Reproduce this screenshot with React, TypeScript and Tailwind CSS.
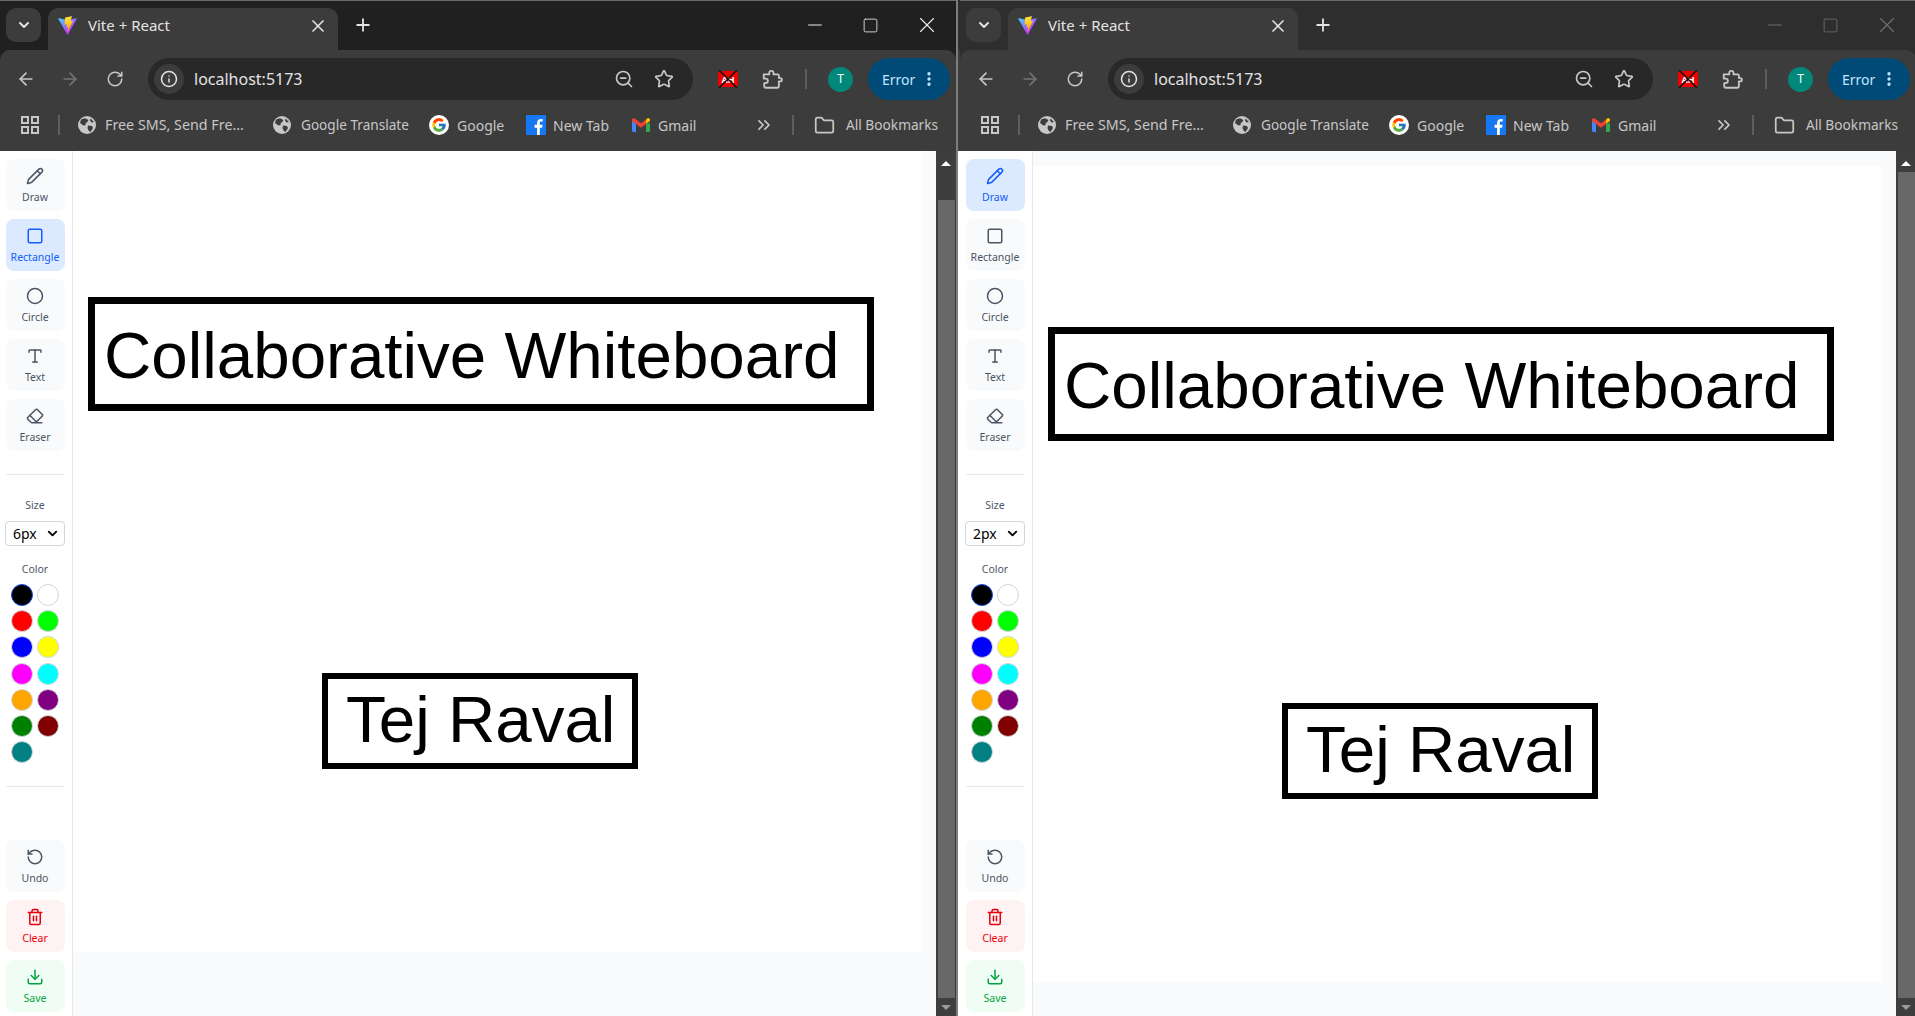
import {
  ArrowLeft, ArrowRight, ChevronDown, ChevronsRight, Circle, Download, Eraser, Folder, Info, Minus,
  Pencil, Plus, RotateCcw, RotateCw, Square, Star, Trash2, Type, X, ZoomOut, EllipsisVertical,
} from 'lucide-react';
import { FcGoogle } from 'react-icons/fc';

const uiFont = { fontFamily: '"Noto Sans", sans-serif' };

const tools = [
  { label: 'Draw', icon: Pencil },
  { label: 'Rectangle', icon: Square },
  { label: 'Circle', icon: Circle },
  { label: 'Text', icon: Type },
  { label: 'Eraser', icon: Eraser },
];

const swatches = ['#000000', '#ffffff', '#ff0000', '#00ff00', '#0000ff', '#ffff00', '#ff00ff', '#00ffff', '#ffa500', '#800080', '#008000', '#800000', '#008080'];

function ViteLogo() {
  return (
    <svg width="21" height="21" viewBox="0 0 32 32">
      <defs>
        <linearGradient id="viteA" x1="6" y1="4" x2="20" y2="24" gradientUnits="userSpaceOnUse">
          <stop stopColor="#41D1FF" />
          <stop offset="1" stopColor="#BD34FE" />
        </linearGradient>
        <linearGradient id="viteB" x1="15" y1="2" x2="18" y2="24" gradientUnits="userSpaceOnUse">
          <stop stopColor="#FFEA83" />
          <stop offset="0.1" stopColor="#FFDD35" />
          <stop offset="1" stopColor="#FFA800" />
        </linearGradient>
      </defs>
      <path fill="url(#viteA)" d="m29.884 6.146-13.142 23.5c-.27.485-.968.488-1.244.005L2.096 6.148c-.3-.526.15-1.164.747-1.057l13.156 2.352a.714.714 0 0 0 .253 0l12.881-2.348c.594-.108 1.046.524.751 1.051z" />
      <path fill="url(#viteB)" d="M22.264 2.007 12.54 3.912a.357.357 0 0 0-.288.33l-.598 10.104a.357.357 0 0 0 .437.369l2.707-.625a.357.357 0 0 1 .43.42l-.804 3.939a.357.357 0 0 0 .453.413l1.672-.508a.357.357 0 0 1 .453.414l-1.278 6.187c-.08.387.435.598.65.267l.143-.222 7.925-15.815a.357.357 0 0 0-.388-.51l-2.787.538a.357.357 0 0 1-.41-.45l1.819-6.306a.357.357 0 0 0-.412-.45z" />
    </svg>
  );
}

function GlobeIcon() {
  return (
    <svg width="18" height="18" viewBox="0 0 18 18" className="shrink-0">
      <circle cx="9" cy="9" r="9" fill="#c7c7c7" />
      <path fill="#3c3c3c" d="M3 3.500 7 2.200 10.500 4 9 6.500 7.500 7 7.800 9 5.500 9.500 2 7zM10 9.500l4 .5 1 2-2.500 4-2-1.500-1-2.500zM12.500 2.500 16 6l-2.500.5-1.500-2z" />
    </svg>
  );
}

function AppsIcon() {
  return (
    <svg width="18" height="18" viewBox="0 0 18 18" fill="none" stroke="#c7c7c7" strokeWidth="2" className="shrink-0">
      <rect x="1" y="1" width="6" height="6" />
      <rect x="11" y="1" width="6" height="6" />
      <rect x="1" y="11" width="6" height="6" />
      <rect x="11" y="11" width="6" height="6" />
    </svg>
  );
}

function FacebookIcon() {
  return (
    <svg width="20" height="20" viewBox="0 0 20 20" className="shrink-0">
      <rect width="20" height="20" fill="#1877f2" />
      <path fill="#fff" d="M13.800 20v-7.200h2.400l.4-3h-2.800V8c0-.9.3-1.400 1.500-1.400h1.400V4c-.3 0-1.100-.1-2-.1-2.100 0-3.600 1.300-3.600 3.700v2.200H8.600v3h2.500V20z" />
    </svg>
  );
}

function GmailIcon() {
  return (
    <svg width="18" height="14" viewBox="0 0 18 14" className="shrink-0">
      <path fill="#4285f4" d="M0 2v10.500C0 13.300.7 14 1.500 14H4V6z" />
      <path fill="#34a853" d="M18 5v7.500c0 .8-.7 1.500-1.500 1.500H14V6z" />
      <path fill="#ea4335" d="M0 1.800C0 .4 1.600-.4 2.700.4L9 5.200 14 1.500V6L9 9.800 4 6 0 3z" />
      <path fill="#fbbc04" d="M14 1.500 15.300.4C16.400-.4 18 .4 18 1.800V3l-4 3z" />
    </svg>
  );
}

function AdblockIcon() {
  return (
    <div className="relative flex h-[16px] w-[20px] shrink-0 items-center justify-center rounded-[3px] bg-[#ee0000]">
      <span className="text-[9px] font-bold leading-none text-white">AH</span>
      <svg width="20" height="18" viewBox="0 0 20 18" className="absolute left-0 top-[-1px]" stroke="#111" strokeWidth="1.500">
        <path d="M1 0 19 18M19 0 1 18" />
      </svg>
    </div>
  );
}

function PuzzleIcon() {
  return (
    <svg width="22" height="22" viewBox="0 0 24 24" fill="none" stroke="#c7c7c7" strokeWidth="2" strokeLinejoin="round" className="shrink-0">
      <path d="M3 7h6V5.500a2.300 2.300 0 0 1 4.600 0V7H18a1.500 1.500 0 0 1 1.500 1.500V11H21a1.800 1.800 0 0 1 0 3.600h-1.500V20a1.500 1.500 0 0 1-1.500 1.500H5A1.500 1.500 0 0 1 3.500 20v-3.500H5a2.500 2.500 0 0 0 0-5H3z" />
    </svg>
  );
}

function Bookmark({ icon, label, gap, width, size = 'text-[14px]' }: { icon: React.ReactNode; label: string; gap: string; width: string; size?: string }) {
  return (
    <div className={`flex shrink-0 items-center ${gap}`}>
      {icon}
      <span className={`${width} whitespace-nowrap ${size} text-[#c7c7c7]`}>{label}</span>
    </div>
  );
}

function ChromeBar({ focused }: { focused: boolean }) {
  return (
    <div className={`shrink-0 text-[#e3e3e3] ${focused ? 'bg-[#202020]' : 'bg-[#2e2e2e]'}`} style={uiFont}>
      {/* Tab strip */}
      <div className="flex h-[50px] items-start border-t border-[#6b6b6b] pl-[6px]">
        <div className="mt-[7px] flex h-[34px] w-[35px] items-center justify-center rounded-[10px] bg-[#3c3c3c]">
          <ChevronDown size={16} strokeWidth={3} />
        </div>
        <div className="ml-[7px] mt-[7px] flex h-[42px] w-[290px] items-center rounded-t-[10px] bg-[#3c3c3c] pb-[7px] pl-[9px] pr-[10px]">
          <ViteLogo />
          <span className="ml-[10px] flex-1 text-[15px] text-[#e3e3e3]">Vite + React</span>
          <X size={20} strokeWidth={2} />
        </div>
        <div className="ml-[15px] mt-[14px]">
          <Plus size={20} strokeWidth={2.200} />
        </div>
        <div className={`ml-auto mr-[16px] mt-[11px] flex items-center gap-[35.500px] ${focused ? 'text-[#ececec]' : 'text-[#6f6f6f]'}`}>
          <Minus size={22} strokeWidth={1.200} />
          <Square size={17} strokeWidth={1.200} />
          <X size={26} strokeWidth={1} />
        </div>
      </div>

      {/* Address row */}
      <div className="flex h-[51px] items-center rounded-t-[10px] bg-[#3c3c3c] pl-[16px] pt-[7px]">
        <ArrowLeft size={20} className="shrink-0 text-[#c7c7c7]" />
        <ArrowRight size={20} className="ml-[24px] shrink-0 text-[#757575]" />
        <RotateCw size={18} className="ml-[26px] shrink-0 text-[#c7c7c7]" />
        <div className="ml-[24px] flex h-[42px] w-[545px] shrink-0 items-center rounded-full bg-[#282828] pl-[6px] pr-[19px]">
          <div className="flex h-[30px] w-[30px] items-center justify-center rounded-full bg-[#3c3c3c]">
            <Info size={18} className="text-[#e3e3e3]" />
          </div>
          <span className="ml-[10px] flex-1 text-[16px] text-[#e3e3e3]">localhost:5173</span>
          <ZoomOut size={20} className="text-[#c7c7c7]" />
          <Star size={20} className="ml-[20px] text-[#c7c7c7]" />
        </div>
        <div className="ml-[25px]"><AdblockIcon /></div>
        <div className="ml-[23px]"><PuzzleIcon /></div>
        <div className="ml-[22px] h-[20px] w-[2px] shrink-0 bg-[#5e5e5e]" />
        <div className="ml-[21px] flex h-[25px] w-[25px] shrink-0 items-center justify-center rounded-full bg-[#00897b] text-[12px] text-white">T</div>
        <div className="ml-[15px] flex h-[42px] w-[82px] shrink-0 items-center rounded-full bg-[#004a77] pl-[14px] text-[14px] text-[#c2e7ff]">
          Error
          <EllipsisVertical size={18} strokeWidth={2.500} className="ml-[5px]" />
        </div>
      </div>

      {/* Bookmarks row */}
      <div className="flex h-[50px] items-center bg-[#3c3c3c] pb-[2px] pl-[21px]">
        <AppsIcon />
        <div className="ml-[19px] h-[20px] w-[2px] shrink-0 bg-[#5e5e5e]" />
        <div className="ml-[18px]">
          <Bookmark icon={<GlobeIcon />} label="Free SMS, Send Fre..." gap="gap-[9px]" width="w-[168px]" size="text-[14.300px]" />
        </div>
        <Bookmark icon={<GlobeIcon />} label="Google Translate" gap="gap-[10px]" width="w-[128px]" size="text-[13.600px]" />
        <Bookmark
          icon={<div className="flex h-[20px] w-[20px] items-center justify-center rounded-full bg-white"><FcGoogle size={16} /></div>}
          label="Google"
          gap="gap-[8px]"
          width="w-[69px]"
        />
        <Bookmark icon={<FacebookIcon />} label="New Tab" gap="gap-[7px]" width="w-[79px]" />
        <Bookmark icon={<GmailIcon />} label="Gmail" gap="gap-[8px]" width="w-[96px]" />
        <ChevronsRight size={20} className="shrink-0 text-[#c7c7c7]" />
        <div className="ml-[18px] h-[20px] w-[2px] shrink-0 bg-[#5e5e5e]" />
        <Folder size={21} className="ml-[20px] shrink-0 text-[#c7c7c7]" />
        <span className="ml-[11px] whitespace-nowrap text-[13.700px] text-[#c7c7c7]">All Bookmarks</span>
      </div>
    </div>
  );
}

function SideButton({ label, icon: Icon, tone }: { label: string; icon: typeof Pencil; tone: string }) {
  return (
    <button className={`flex h-[52px] w-[59px] shrink-0 flex-col items-center justify-center gap-[5px] rounded-lg pt-[1px] ${tone}`}>
      <Icon size={18} strokeWidth={2} />
      <span className="text-[10.500px] leading-[15px]">{label}</span>
    </button>
  );
}

function Sidebar({ tool, size }: { tool: string; size: string }) {
  return (
    <aside className="flex w-[73px] shrink-0 flex-col items-center border-r border-gray-200 bg-white pr-[2px] pt-[8px]" style={uiFont}>
      <div className="flex flex-col gap-[8px]">
        {tools.map(t => (
          <SideButton key={t.label} label={t.label} icon={t.icon} tone={t.label === tool ? 'bg-blue-100 text-blue-600' : 'bg-gray-50 text-gray-600'} />
        ))}
      </div>
      <div className="mt-[23px] h-px w-[59px] shrink-0 bg-gray-200" />
      <span className="mt-[23px] text-[10.500px] leading-[15px] text-gray-600">Size</span>
      <div className="relative mt-[8px] h-[25px] w-[60px] shrink-0">
        <select defaultValue={size} className="h-full w-full appearance-none rounded border border-gray-300 pl-[7px] text-[14px] text-black">
          <option value="2px">2px</option>
          <option value="4px">4px</option>
          <option value="6px">6px</option>
          <option value="8px">8px</option>
        </select>
        <ChevronDown size={15} strokeWidth={3} className="pointer-events-none absolute right-[5px] top-[5px] text-black" />
      </div>
      <span className="mt-[16px] text-[10.500px] leading-[15px] text-gray-600">Color</span>
      <div className="mt-[7px] grid grid-cols-[22px_22px] gap-x-[4px] gap-y-[4.200px]">
        {swatches.map((c, i) => (
          <div
            key={c}
            className={`h-[22px] w-[22px] rounded-full border ${i === 0 ? 'border-blue-700' : 'border-gray-300'}`}
            style={{ background: c }}
          />
        ))}
      </div>
      <div className="mt-[23px] h-px w-[59px] shrink-0 bg-gray-200" />
      <div className="mb-[4px] mt-auto flex flex-col gap-[8px]">
        <SideButton label="Undo" icon={RotateCcw} tone="bg-gray-50 text-gray-600" />
        <SideButton label="Clear" icon={Trash2} tone="bg-red-50 text-red-600" />
        <SideButton label="Save" icon={Download} tone="bg-green-50 text-green-600" />
      </div>
    </aside>
  );
}

function Scrollbar({ thumbGap }: { thumbGap: string }) {
  return (
    <div className="flex w-[20px] shrink-0 flex-col items-center bg-[#3e3e3e] pb-[6px] pt-[10px]">
      <div className="h-0 w-0 shrink-0 border-x-[5px] border-b-[5px] border-x-transparent border-b-white" />
      <div className={`w-[17px] flex-1 bg-[#686868] ${thumbGap}`} />
      <div className="mt-[7px] h-0 w-0 shrink-0 border-x-[5px] border-t-[5px] border-x-transparent border-t-[#9a9a9a]" />
    </div>
  );
}

function Whiteboard({ shift }: { shift: string }) {
  return (
    <div className={`relative h-[816px] w-[849px] shrink-0 bg-white text-black ${shift}`} style={{ fontFamily: '"Liberation Sans", Arial, sans-serif' }}>
      <div className="absolute left-[15px] top-[161px] h-[114px] w-[786px] border-[7px] border-black" />
      <span className="absolute left-[31px] top-[183px] whitespace-nowrap text-[65.500px] leading-[74px]">Collaborative Whiteboard</span>
      <div className="absolute left-[249px] top-[537px] h-[96px] w-[316px] border-[6px] border-black" />
      <span className="absolute left-[273px] top-[547px] whitespace-nowrap text-[65.500px] leading-[74px]">Tej Raval</span>
    </div>
  );
}

function BrowserWindow({ focused, tool, size }: { focused: boolean; tool: string; size: string }) {
  return (
    <div className="flex h-[1016px] w-[958px] shrink-0 flex-col overflow-hidden border-r-2 border-[#7d7d7d]">
      <ChromeBar focused={focused} />
      <div className="flex min-h-0 flex-1">
        <Sidebar tool={tool} size={size} />
        <div className="min-w-0 flex-1 overflow-hidden bg-gray-50">
          <Whiteboard shift={focused ? '-mt-[15px]' : 'mt-[15px]'} />
        </div>
        <Scrollbar thumbGap={focused ? 'mt-[34px]' : 'mt-[6px]'} />
      </div>
    </div>
  );
}

export default function App() {
  return (
    <div className="flex h-[1016px] w-[1915px] overflow-hidden bg-white">
      <BrowserWindow focused tool="Rectangle" size="6px" />
      <div className="flex w-[2px] shrink-0 flex-col">
        <div className="h-[50px] bg-[#2e2e2e]" />
        <div className="h-[101px] bg-[#3c3c3c]" />
      </div>
      <BrowserWindow focused={false} tool="Draw" size="2px" />
    </div>
  );
}
